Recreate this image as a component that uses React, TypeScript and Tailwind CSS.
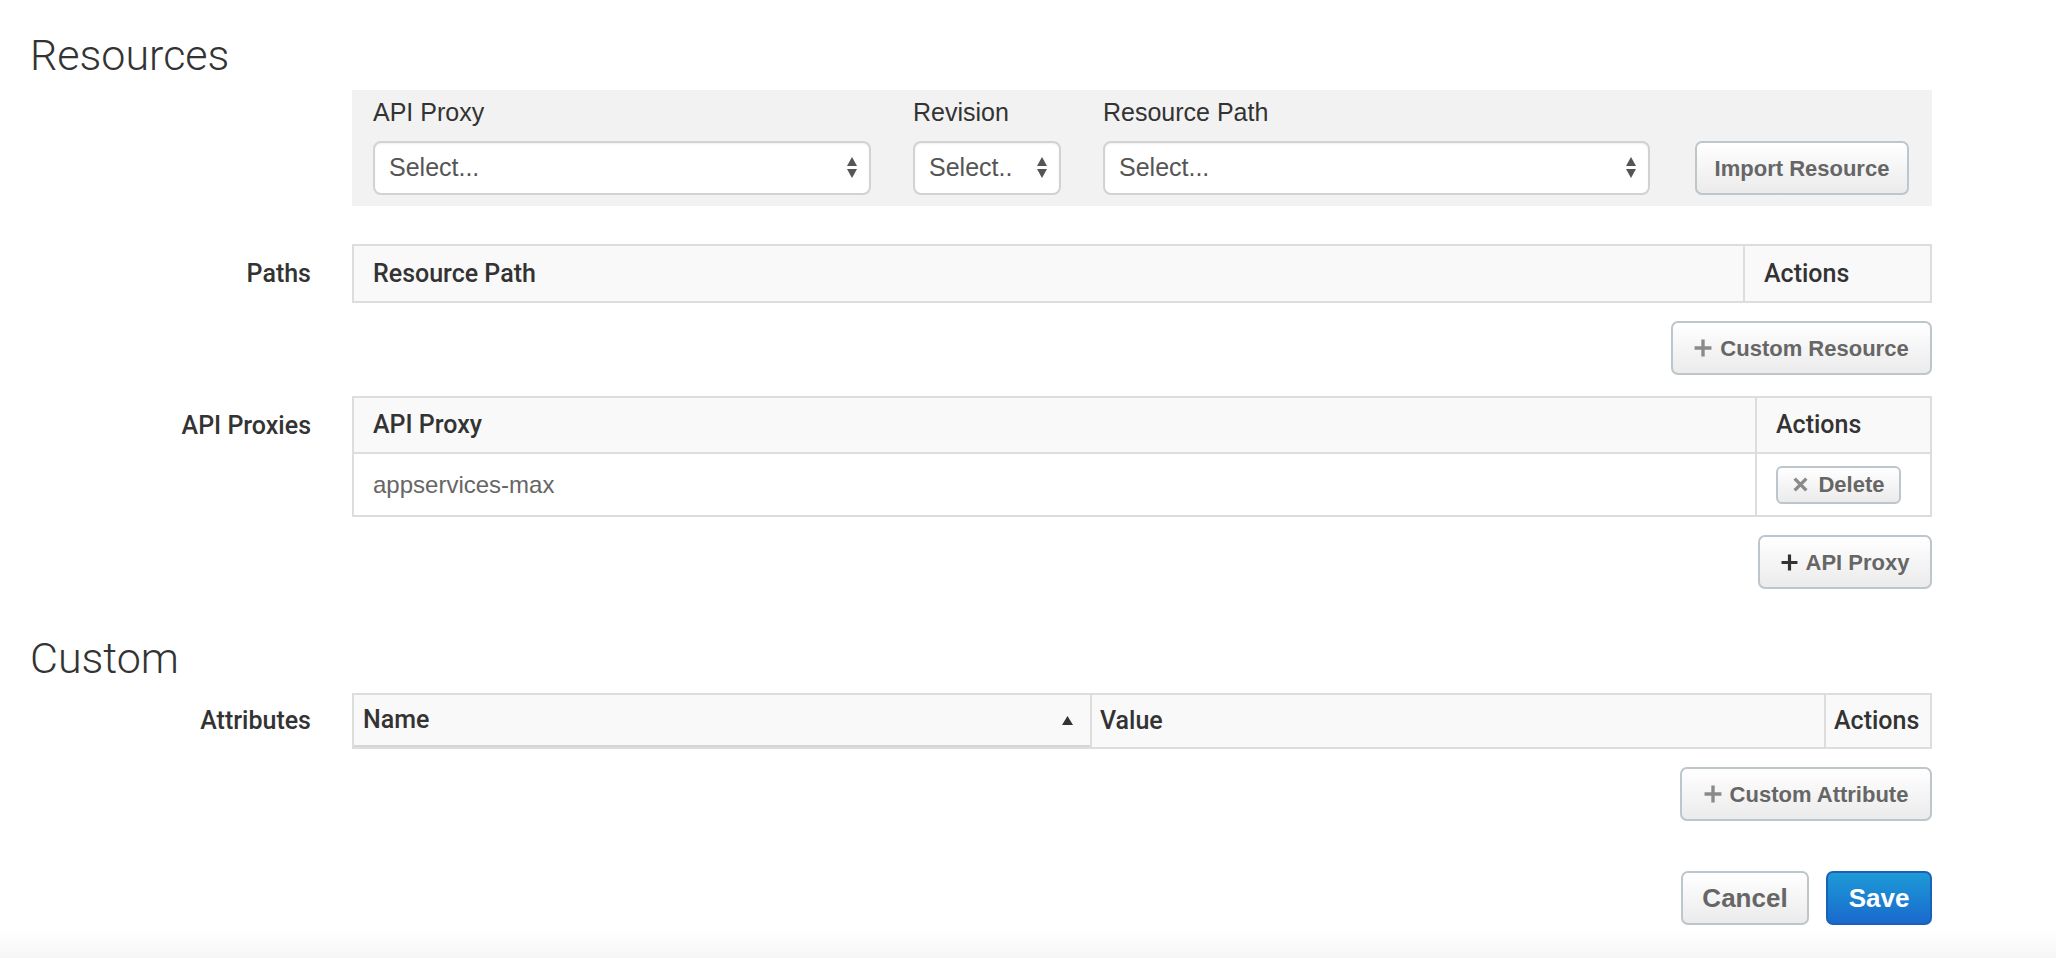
import type { ReactNode } from "react";
import clsx from "clsx";

const Arrows = () => (
  <svg width="10" height="22" viewBox="0 0 10 22" className="shrink-0">
    <path d="M5 0 L10 9 H0 Z" fill="#555" />
    <path d="M0 12 H10 L5 21 Z" fill="#555" />
  </svg>
);

const Plus = ({ color, size = 15 }: { color: string; size?: number }) => (
  <svg width={size} height={size} viewBox="0 0 16 16" className="shrink-0">
    <path d="M8 0.5 V15.5 M0.5 8 H15.5" stroke={color} strokeWidth="3" />
  </svg>
);

const Cross = () => (
  <svg width="17" height="17" viewBox="0 0 16 16" className="shrink-0">
    <path d="M2.5 2.5 L13.5 13.5 M13.5 2.5 L2.5 13.5" stroke="#8a8a8a" strokeWidth="3.2" />
  </svg>
);

const Select = ({ className, text }: { className: string; text: string }) => (
  <div
    className={clsx(
      "h-[54px] rounded-[8px] border-2 border-[#d2d2d2] bg-white flex items-center justify-between pl-[14px] pr-[12px] text-[25px] text-[#555] shadow-[inset_0_1px_2px_rgba(0,0,0,0.06)]",
      className
    )}
  >
    <span>{text}</span>
    <Arrows />
  </div>
);

const Btn = ({ children, className }: { children: ReactNode; className?: string }) => (
  <button
    className={clsx(
      "h-[54px] rounded-[7px] border-2 border-[#bcc6cb] bg-linear-to-b from-white to-[#ebebeb] font-bold text-[22px] text-[#666] flex items-center justify-center gap-[8px]",
      className
    )}
  >
    {children}
  </button>
);

const headCls = "font-['Roboto','Liberation_Sans',sans-serif] font-medium text-[25px] text-[#333]";

const FormRow = ({ label, labelH, children }: { label: string; labelH: string; children: ReactNode }) => (
  <div className="flex gap-[41px]">
    <div className={clsx("w-[281px] mt-[2px] flex items-center justify-end", labelH, headCls)}>{label}</div>
    <div className="w-[1580px]">{children}</div>
  </div>
);

const Heading = ({ children, className }: { children: ReactNode; className?: string }) => (
  <h2 className={clsx("h-[48px] leading-[48px] text-[43px] font-light text-[#333] font-['Roboto','Liberation_Sans',sans-serif]", className)}>
    {children}
  </h2>
);

export default function App() {
  return (
    <div className="min-h-[958px] bg-white flex flex-col font-['Liberation_Sans',Arial,sans-serif] text-[#333]">
      <div className="pl-[30px] pt-[31px]">
        <Heading>Resources</Heading>

        {/* import panel */}
        <div className="flex gap-[41px] mt-[11px]">
          <div className="w-[281px]" />
          <div className="w-[1580px] h-[116px] bg-[#f2f2f2] pl-[21px] pt-[7px] flex items-end pb-[11px] gap-[42px]">
            <div className="w-[498px]">
              <div className="h-[30px] leading-[30px] text-[25px] mb-[14px]">API Proxy</div>
              <Select className="w-full" text="Select..." />
            </div>
            <div className="w-[148px]">
              <div className="h-[30px] leading-[30px] text-[25px] mb-[14px]">Revision</div>
              <Select className="w-full" text="Select.." />
            </div>
            <div className="w-[547px]">
              <div className="h-[30px] leading-[30px] text-[25px] mb-[14px]">Resource Path</div>
              <Select className="w-full" text="Select..." />
            </div>
            <Btn className="w-[214px] ml-[3px]">Import Resource</Btn>
          </div>
        </div>

        {/* paths */}
        <div className="mt-[38px]">
          <FormRow label="Paths" labelH="h-[55px]">
            <div className="border-2 border-[#ddd] bg-[#f9f9f9] flex h-[59px]">
              <div className={clsx("flex-1 flex items-center pl-[19px]", headCls)}>Resource Path</div>
              <div className={clsx("w-[187px] border-l-2 border-[#ddd] flex items-center pl-[19px]", headCls)}>Actions</div>
            </div>
            <div className="flex justify-end mt-[18px]">
              <Btn className="w-[261px]">
                <Plus color="#8a8a8a" size={18} />
                Custom Resource
              </Btn>
            </div>
          </FormRow>
        </div>

        {/* api proxies */}
        <div className="mt-[21px]">
          <FormRow label="API Proxies" labelH="h-[56px]">
            <div className="border-2 border-[#ddd]">
              <div className="bg-[#f9f9f9] flex h-[56px] border-b-2 border-[#ddd]">
                <div className={clsx("flex-1 flex items-center pl-[19px]", headCls)}>API Proxy</div>
                <div className={clsx("w-[175px] border-l-2 border-[#ddd] flex items-center pl-[19px]", headCls)}>Actions</div>
              </div>
              <div className="flex h-[61px] bg-white">
                <div className="flex-1 flex items-center pl-[19px] text-[24px] text-[#666]">appservices-max</div>
                <div className="w-[175px] border-l-2 border-[#ddd] flex items-center pl-[19px]">
                  <button className="h-[38px] w-[125px] rounded-[6px] border-2 border-[#bcc6cb] bg-linear-to-b from-white to-[#ebebeb] font-bold text-[22px] text-[#666] flex items-center justify-center gap-[9px]">
                    <Cross />
                    Delete
                  </button>
                </div>
              </div>
            </div>
            <div className="flex justify-end mt-[18px]">
              <Btn className="w-[174px]">
                <Plus color="#333" size={17} />
                API Proxy
              </Btn>
            </div>
          </FormRow>
        </div>

        <Heading className="mt-[45px]">Custom</Heading>

        {/* attributes */}
        <div className="mt-[11px]">
          <FormRow label="Attributes" labelH="h-[52px]">
            <div className="border-2 border-[#ddd] bg-[#f9f9f9] flex h-[56px]">
              <div className={clsx("w-[736px] flex items-center justify-between pl-[9px] pr-[17px] border-b-[2px] border-[#d6d6d6]", headCls)}>
                <span>Name</span>
                <svg width="11" height="9" viewBox="0 0 10 8">
                  <path d="M5 0 L10 8 H0 Z" fill="#333" />
                </svg>
              </div>
              <div className={clsx("flex-1 border-l-2 border-[#ddd] flex items-center pl-[8px]", headCls)}>Value</div>
              <div className={clsx("w-[106px] border-l-2 border-[#ddd] flex items-center pl-[8px]", headCls)}>Actions</div>
            </div>
            <div className="flex justify-end mt-[18px]">
              <Btn className="w-[252px]">
                <Plus color="#8a8a8a" size={18} />
                Custom Attribute
              </Btn>
            </div>
            <div className="flex justify-end gap-[17px] mt-[50px]">
              <button className="h-[54px] w-[128px] rounded-[7px] border-2 border-[#bcc6cb] bg-linear-to-b from-white to-[#ebebeb] font-bold text-[26px] text-[#666]">
                Cancel
              </button>
              <button className="h-[54px] w-[106px] rounded-[7px] border-2 border-[#1a62b8] bg-linear-to-b from-[#1f9ad7] to-[#1b69cd] font-bold text-[26px] text-white">
                Save
              </button>
            </div>
          </FormRow>
        </div>
      </div>
      <div className="mt-auto h-[28px] bg-linear-to-b from-white to-[#f6f6f6]" />
    </div>
  );
}
